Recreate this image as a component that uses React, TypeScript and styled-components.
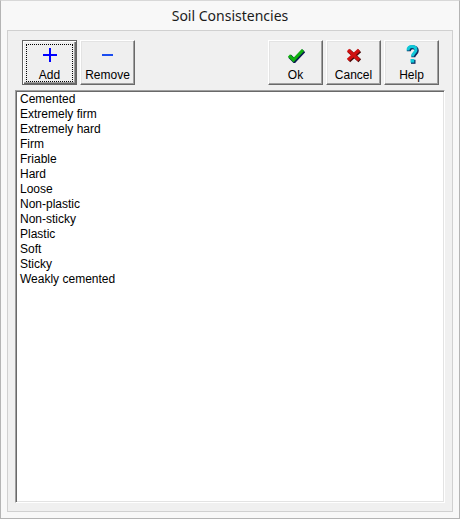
import React from "react";
import styled, { createGlobalStyle, css } from "styled-components";

const Global = createGlobalStyle`
  html, body { margin: 0; padding: 0; background: #f8f8f8; }
  * { box-sizing: border-box; }
`;

const Window = styled.div`
  width: 460px;
  height: 519px;
  border: 1px solid #b4b4b4;
  border-top-color: #d8d8d8;
  background: #f8f8f8;
  display: flex;
  flex-direction: column;
  padding: 0 6px 6px 6px;
`;

const TitleBar = styled.div`
  height: 29px;
  display: flex;
  align-items: center;
  justify-content: center;
  font-family: "Noto Sans", "Open Sans", sans-serif;
  font-size: 14px;
  color: #1b1b1b;
  padding-bottom: 1px;
`;

const Panel = styled.div`
  flex: 1;
  border: 1px solid #d0d0d0;
  background: #f0f0f0;
  display: flex;
  flex-direction: column;
  padding: 9px 7px 8px 7px;
  gap: 5px;
`;

const Toolbar = styled.div`
  display: flex;
  padding: 0 6px 0 7px;
  gap: 3px;
`;

const Spacer = styled.div`
  flex: 1;
`;

const ToolButton = styled.div<{ $default?: boolean }>`
  position: relative;
  width: 55px;
  height: 45px;
  background: #efefef;
  border: 1px solid;
  border-color: #ffffff #696969 #696969 #ffffff;
  box-shadow: inset -1px -1px 0 #a0a0a0, inset 1px 1px 0 #e3e3e3;
  display: flex;
  flex-direction: column;
  align-items: center;
  font-family: "Liberation Sans", Arial, sans-serif;
  font-size: 12px;
  color: #000;
  padding-top: 3px;
  ${(p) =>
    p.$default &&
    css`
      border: 1px solid #646464;
      box-shadow: inset 1px 1px 0 #ffffff, inset -1px -1px 0 #696969,
        inset -2px -2px 0 #a0a0a0;
      &::after {
        content: "";
        position: absolute;
        left: 3px;
        top: 3px;
        right: 3px;
        bottom: 2px;
        border: 1px dotted #000;
      }
    `}
`;

const IconBox = styled.div`
  height: 22px;
  display: flex;
  align-items: center;
  justify-content: center;
`;

const Label = styled.div`
  margin-top: 2px;
  line-height: 14px;
`;

const ListBox = styled.div`
  flex: 1;
  background: #ffffff;
  border: 1px solid;
  border-color: #a0a0a0 #ffffff #ffffff #a0a0a0;
  box-shadow: inset 1px 1px 0 #696969, inset -1px -1px 0 #e3e3e3;
  padding: 1px 3px;
  font-family: "Liberation Sans", Arial, sans-serif;
  font-size: 12px;
  color: #000;
`;

const Item = styled.div`
  height: 15px;
  line-height: 15px;
  padding-left: 1px;
  white-space: nowrap;
`;

const PlusIcon = () => (
  <svg width="14" height="14" viewBox="0 0 14 14">
    <rect x="6" y="0" width="2" height="14" fill="#0000ff" />
    <rect x="0" y="6" width="14" height="2" fill="#0000ff" />
  </svg>
);

const MinusIcon = () => (
  <svg width="11" height="14" viewBox="0 0 11 14">
    <rect x="0" y="6" width="11" height="2" fill="#1a4cf0" />
  </svg>
);

const CheckIcon = () => (
  <svg width="18" height="16" viewBox="0 0 18 16">
    <path
      d="M2 8.5 L6.5 13 L16 3"
      fill="none"
      stroke="#0a1a50"
      strokeWidth="4.2"
      strokeLinejoin="miter"
      transform="translate(0.8,0.8)"
    />
    <path
      d="M2 8.5 L6.5 13 L16 3"
      fill="none"
      stroke="#10b010"
      strokeWidth="3.2"
      strokeLinejoin="miter"
    />
  </svg>
);

const CrossIcon = () => (
  <svg width="17" height="16" viewBox="0 0 17 16">
    <path
      d="M3 3 L14 13 M14 3 L3 13"
      fill="none"
      stroke="#4a0a0a"
      strokeWidth="4"
      transform="translate(0.8,0.8)"
    />
    <path
      d="M3 3 L14 13 M14 3 L3 13"
      fill="none"
      stroke="#d01010"
      strokeWidth="3.4"
    />
  </svg>
);

const HelpIcon = () => (
  <svg width="14" height="20" viewBox="0 0 14 20">
    <g transform="translate(0.8,0.8)">
      <path
        d="M3 5.5 C3 2.5 5 1.5 7 1.5 C9.5 1.5 11 3 11 5 C11 7.5 7.5 8 7.5 11.5"
        fill="none"
        stroke="#0a2a60"
        strokeWidth="4"
      />
      <rect x="5.2" y="14" width="4.5" height="4" fill="#0a2a60" />
    </g>
    <path
      d="M3 5.5 C3 2.5 5 1.5 7 1.5 C9.5 1.5 11 3 11 5 C11 7.5 7.5 8 7.5 11.5"
      fill="none"
      stroke="#10c8d8"
      strokeWidth="3"
    />
    <rect x="5.5" y="14" width="3.8" height="3.6" fill="#10c8d8" />
  </svg>
);

const items = [
  "Cemented",
  "Extremely firm",
  "Extremely hard",
  "Firm",
  "Friable",
  "Hard",
  "Loose",
  "Non-plastic",
  "Non-sticky",
  "Plastic",
  "Soft",
  "Sticky",
  "Weakly cemented",
];

export default function App() {
  return (
    <>
      <Global />
      <Window>
        <TitleBar>Soil Consistencies</TitleBar>
        <Panel>
          <Toolbar>
            <ToolButton $default>
              <IconBox>
                <PlusIcon />
              </IconBox>
              <Label>Add</Label>
            </ToolButton>
            <ToolButton>
              <IconBox>
                <MinusIcon />
              </IconBox>
              <Label>Remove</Label>
            </ToolButton>
            <Spacer />
            <ToolButton>
              <IconBox>
                <CheckIcon />
              </IconBox>
              <Label>Ok</Label>
            </ToolButton>
            <ToolButton>
              <IconBox>
                <CrossIcon />
              </IconBox>
              <Label>Cancel</Label>
            </ToolButton>
            <ToolButton>
              <IconBox>
                <HelpIcon />
              </IconBox>
              <Label>Help</Label>
            </ToolButton>
          </Toolbar>
          <ListBox>
            {items.map((it) => (
              <Item key={it}>{it}</Item>
            ))}
          </ListBox>
        </Panel>
      </Window>
    </>
  );
}
